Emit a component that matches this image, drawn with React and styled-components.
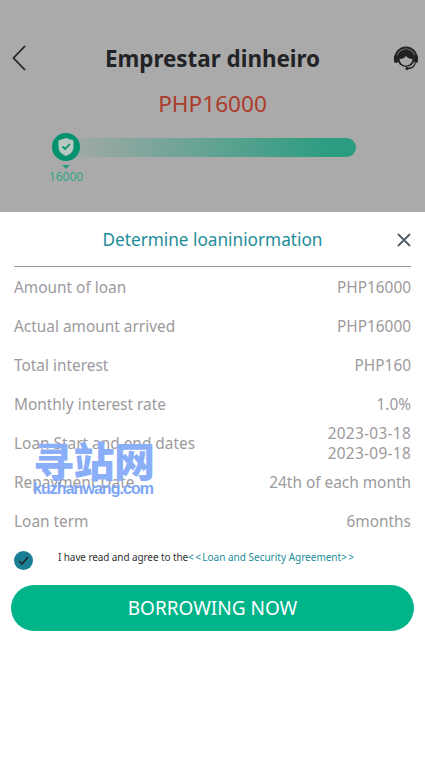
import React from 'react';
import styled, { createGlobalStyle } from 'styled-components';

const GlobalStyle = createGlobalStyle`
    html, body {
        margin: 0;
        padding: 0;
        background: #fff;
        font-family: "Noto Sans", "Open Sans", "Noto Sans CJK SC", sans-serif;
    }
`;

const Page = styled.div`
    position: relative;
    width: 425px;
    height: 775px;
    overflow: hidden;
    background: #fff;
`;

const TopPanel = styled.div`
    height: 212px;
    box-sizing: border-box;
    padding-top: 39px;
    background: #aaaaaa;
`;

const NavBar = styled.div`
    display: grid;
    grid-template-columns: 1fr auto 1fr;
    align-items: center;
    height: 38px;
    padding: 0 12px;
`;

const NavAgent = styled.div`
    display: flex;
    justify-content: flex-end;
    margin-right: -6px;
`;

const NavTitle = styled.div`
    font-size: 22.4px;
    font-weight: 700;
    color: #222326;
`;

const Amount = styled.div`
    margin-top: 11px;
    text-align: center;
    font-size: 22.6px;
    line-height: 32px;
    color: #ad3b2b;
`;

const SliderRow = styled.div`
    position: relative;
    width: 304px;
    height: 28px;
    margin: 13px 0 0 52px;
    display: flex;
    align-items: center;
`;

const SliderTrack = styled.div`
    width: 100%;
    height: 19px;
    border-radius: 0 10px 10px 0;
    background: linear-gradient(90deg, rgba(42, 157, 128, 0.08) 8%, #2a9d80 92%);
`;

const SliderThumb = styled.div`
    position: absolute;
    left: 0;
    top: 0;
    width: 28px;
    height: 28px;
    border-radius: 50%;
    background: #04926f;
    display: flex;
    align-items: center;
    justify-content: center;
`;

const ThumbPointer = styled.div`
    width: 0;
    height: 0;
    margin: 4px 0 0 62px;
    border-left: 4px solid transparent;
    border-right: 4px solid transparent;
    border-top: 4px solid #2a9d80;
`;

const ThumbValue = styled.div`
    width: 36px;
    margin-left: 48px;
    text-align: center;
    font-size: 12px;
    line-height: 16px;
    color: #2fa586;
`;

const Sheet = styled.div`
    padding: 0 14px;
`;

const SheetHeader = styled.div`
    position: relative;
    height: 55px;
    margin-bottom: 1px;
    padding-top: 1px;
    display: flex;
    align-items: center;
    justify-content: center;
    border-bottom: 1px solid #9a9a9c;
    box-sizing: border-box;
    font-size: 17.2px;
    color: #1c8d99;
`;

const CloseButton = styled.div`
    position: absolute;
    right: 0;
    top: 21px;
    display: flex;
`;

const InfoRow = styled.div`
    display: flex;
    align-items: center;
    justify-content: space-between;
    height: 39px;
    font-size: 15.4px;
    line-height: 20px;
    color: #9c9a9c;
`;

const InfoValue = styled.div`
    text-align: right;
`;

const DateLine = styled.div`
    letter-spacing: 0.3px;
`;

const AgreeRow = styled.div`
    display: flex;
    align-items: flex-start;
    margin-top: 9px;
    font-size: 10px;
    line-height: 14px;
    letter-spacing: -0.1px;
    color: #333;
`;

const CheckMark = styled.div`
    flex: none;
    width: 19px;
    height: 19px;
    margin-top: 1px;
    margin-right: 25px;
    border-radius: 50%;
    background: #1a7f95;
    display: flex;
    align-items: center;
    justify-content: center;
`;

const AgreeLink = styled.span`
    letter-spacing: 0;
    color: #1c8d99;
`;

const Bracket = styled.span`
    letter-spacing: 1.4px;
`;

const BorrowButton = styled.div`
    height: 46px;
    margin: 15px -3px 0;
    border-radius: 23px;
    background: #00b48a;
    color: #fff;
    font-size: 19px;
    display: flex;
    align-items: center;
    justify-content: center;
`;

const Watermark = styled.div`
    position: absolute;
    left: 33px;
    top: 438px;
    width: 120px;
    text-align: center;
    white-space: nowrap;
    pointer-events: none;
`;

const WatermarkCn = styled.div`
    font-family: "Noto Sans CJK SC", sans-serif;
    font-size: 41px;
    font-weight: 900;
    line-height: 43px;
    letter-spacing: -0.5px;
    color: #8aaef8;
`;

const WatermarkEn = styled.div`
    font-family: "Liberation Sans", sans-serif;
    font-size: 16px;
    font-weight: 700;
    line-height: 16px;
    letter-spacing: -0.95px;
    color: #7ea6f8;
`;

const rows = [
    ['Amount of loan', 'PHP16000'],
    ['Actual amount arrived', 'PHP16000'],
    ['Total interest', 'PHP160'],
    ['Monthly interest rate', '1.0%'],
    ['Loan Start and end dates', ['2023-03-18', '2023-09-18']],
    ['Repayment Date', '24th of each month'],
    ['Loan term', '6months'],
];

const BackIcon = () => (
    <svg width="14" height="26" viewBox="0 0 14 26" fill="none" stroke="#222" strokeWidth="1.8">
        <path d="M13 1 1.5 13 13 25" />
    </svg>
);

const AgentIcon = () => (
    <svg width="26" height="26" viewBox="0 0 26 26">
        <path d="M2.5 13a10.5 10.5 0 0 1 21 0" fill="none" stroke="#222" strokeWidth="2" />
        <rect x="1" y="10" width="4" height="8" rx="2" fill="#222" />
        <rect x="21" y="10" width="4" height="8" rx="2" fill="#222" />
        <circle cx="13" cy="13" r="9" fill="#222" />
        <path d="M6.5 14c3 0 5-1 6.500-3 1.500 2 3.500 3 6.500 3-.5 4-3 6.500-6.500 6.500S7 18 6.500 14z" fill="#aaa" />
        <path d="M22 18c0 3-3 5.500-7 5.500" fill="none" stroke="#222" strokeWidth="1.300" />
        <circle cx="14" cy="23.500" r="1.600" fill="#222" />
    </svg>
);

const ShieldIcon = () => (
    <svg width="16" height="18" viewBox="0 0 16 18">
        <path d="M8 0 15.500 2.500V9c0 4.500-3.500 7.500-7.500 9C4 16.500.5 13.500.5 9V2.500z" fill="#b9c9c2" />
        <path d="M4.500 8.500 7.200 11 11.800 6" fill="none" stroke="#04926f" strokeWidth="1.800" />
    </svg>
);

const CloseIcon = () => (
    <svg width="14" height="14" viewBox="0 0 14 14" fill="none" stroke="#4f5b66" strokeWidth="1.800">
        <path d="M1 1 13 13M13 1 1 13" />
    </svg>
);

const TickIcon = () => (
    <svg width="11" height="9" viewBox="0 0 11 9" fill="none" stroke="#1c2226" strokeWidth="1.400">
        <path d="M1 5 4 8 10 1" />
    </svg>
);

const App = () => (
    <Page>
        <GlobalStyle />
        <TopPanel>
            <NavBar>
                <BackIcon />
                <NavTitle>Emprestar dinheiro</NavTitle>
                <NavAgent><AgentIcon /></NavAgent>
            </NavBar>
            <Amount>PHP16000</Amount>
            <SliderRow>
                <SliderTrack />
                <SliderThumb><ShieldIcon /></SliderThumb>
            </SliderRow>
            <ThumbPointer />
            <ThumbValue>16000</ThumbValue>
        </TopPanel>
        <Sheet>
            <SheetHeader>
                Determine loaniniormation
                <CloseButton><CloseIcon /></CloseButton>
            </SheetHeader>
            {rows.map(([label, value]) => (
                <InfoRow key={label}>
                    <div>{label}</div>
                    <InfoValue>
                        {Array.isArray(value) ? value.map(v => <DateLine key={v}>{v}</DateLine>) : value}
                    </InfoValue>
                </InfoRow>
            ))}
            <AgreeRow>
                <CheckMark><TickIcon /></CheckMark>
                <div>I have read and agree to the<AgreeLink><Bracket>&lt;&lt;</Bracket>Loan and Security Agreement<Bracket>&gt;&gt;</Bracket></AgreeLink></div>
            </AgreeRow>
            <BorrowButton>BORROWING NOW</BorrowButton>
        </Sheet>
        <Watermark>
            <WatermarkCn>寻站网</WatermarkCn>
            <WatermarkEn>kuzhanwang.com</WatermarkEn>
        </Watermark>
    </Page>
);

export default App;
